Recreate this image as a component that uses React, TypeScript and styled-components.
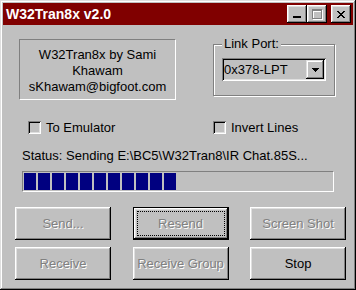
import React from "react";
import styled, { createGlobalStyle, css } from "styled-components";

const Global = createGlobalStyle`
  html, body { margin: 0; padding: 0; background: #c0c0c0; }
  body { font-family: "Liberation Sans", Arial, sans-serif; font-size: 13px; color: #000; }
  * { box-sizing: border-box; }
`;

const Window = styled.div`
  width: 356px;
  height: 290px;
  padding: 3px;
  background: #c0c0c0;
  display: flex;
  flex-direction: column;
  box-shadow: inset -1px -1px #000, inset 1px 1px #dfdfdf, inset -2px -2px #808080, inset 2px 2px #fff;
`;

const TitleBar = styled.div`
  height: 22px;
  background: #800000;
  display: flex;
  align-items: center;
  padding: 0 2px 0 3px;
`;

const Title = styled.div`
  flex: 1;
  color: #fff;
  font-weight: bold;
  font-size: 14px;
  line-height: 16px;
  white-space: nowrap;
`;

const CaptionButton = styled.div<{ $gap?: number }>`
  width: 20px;
  height: 18px;
  margin-left: ${(p) => p.$gap ?? 0}px;
  background: #c0c0c0;
  box-shadow: inset -1px -1px #000, inset 1px 1px #fff, inset -2px -2px #808080, inset 2px 2px #dfdfdf;
  display: flex;
  align-items: center;
  justify-content: center;
  svg { display: block; shape-rendering: crispEdges; }
`;

const Content = styled.div`
  flex: 1;
  display: flex;
  flex-direction: column;
`;

const TopRow = styled.div`
  display: flex;
  align-items: flex-start;
  margin-top: 14px;
  padding-left: 16px;
`;

const InfoBox = styled.div`
  width: 157px;
  height: 61px;
  border-style: solid;
  border-width: 1px;
  border-color: #808080 #fff #fff #808080;
  padding-top: 7px;
  text-align: center;
  line-height: 16px;
`;

const Group = styled.div`
  position: relative;
  width: 122px;
  height: 52px;
  margin: 5px 0 0 37px;
  border: 1px solid #808080;
  box-shadow: inset 1px 1px #fff, 1px 1px #fff;
  padding: 13px 0 0 8px;
`;

const Legend = styled.span`
  position: absolute;
  top: -9px;
  left: 8px;
  padding: 0 2px;
  background: #c0c0c0;
  line-height: 16px;
`;

const Combo = styled.div`
  width: 104px;
  height: 23px;
  padding: 2px;
  display: flex;
  align-items: stretch;
  background: #c0c0c0;
  box-shadow: inset 1px 1px #808080, inset -1px -1px #fff, inset 2px 2px #000, inset -2px -2px #dfdfdf;
`;

const ComboText = styled.div`
  flex: 1;
  padding-left: 0px;
  line-height: 19px;
`;

const DropButton = styled.div`
  width: 18px;
  display: flex;
  align-items: center;
  justify-content: center;
  box-shadow: inset -1px -1px #000, inset 1px 1px #dfdfdf, inset -2px -2px #808080, inset 2px 2px #fff;
  svg { display: block; shape-rendering: crispEdges; }
`;

const CheckRow = styled.div`
  display: grid;
  grid-template-columns: 185px auto;
  margin-top: 21px;
  padding-left: 25px;
`;

const CheckItem = styled.label`
  display: flex;
  align-items: center;
  gap: 5px;
  height: 13px;
  line-height: 16px;
`;

const CheckBox = styled.span`
  width: 13px;
  height: 13px;
  background: #c0c0c0;
  box-shadow: inset 1px 1px #808080, inset -1px -1px #fff, inset 2px 2px #000, inset -2px -2px #dfdfdf;
`;

const Status = styled.div`
  margin-top: 14px;
  padding-left: 19px;
  line-height: 16px;
  white-space: nowrap;
`;

const Progress = styled.div`
  margin: 7px 0 0 19px;
  width: 312px;
  height: 21px;
  border-style: solid;
  border-width: 1px;
  border-color: #808080 #fff #fff #808080;
  padding: 1px 1px 1px 1px;
  display: flex;
  gap: 2px;
`;

const Chunk = styled.div`
  width: 12px;
  height: 100%;
  background: #000080;
`;

const ButtonGrid = styled.div`
  display: grid;
  grid-template-columns: repeat(3, 96px);
  grid-auto-rows: 33px;
  column-gap: 21.5px;
  row-gap: 7px;
  margin-top: 15px;
  padding-left: 12px;
`;

const Button = styled.div<{ $disabled?: boolean; $default?: boolean }>`
  position: relative;
  display: flex;
  align-items: center;
  justify-content: center;
  white-space: nowrap;
  background: #c0c0c0;
  box-shadow: inset -1px -1px #000, inset 1px 1px #fff, inset -2px -2px #808080, inset 2px 2px #dfdfdf;
  color: ${(p) => (p.$disabled ? "#808080" : "#000")};
  text-shadow: ${(p) => (p.$disabled ? "1px 1px 0 #fff" : "none")};
  ${(p) =>
    p.$default &&
    css`
      border: 1px solid #000;
      &::after {
        content: "";
        position: absolute;
        inset: 3px;
        border: 1px dotted #000;
      }
    `}
`;

const Minimize = () => (
  <svg width="8" height="10" viewBox="0 0 8 10">
    <rect x="0" y="7" width="8" height="2" fill="#000" />
  </svg>
);

const Maximize = () => (
  <svg width="11" height="11" viewBox="0 0 11 11">
    <g fill="#fff" transform="translate(1,1)">
      <rect x="0" y="0" width="10" height="2" />
      <rect x="0" y="0" width="1" height="10" />
      <rect x="9" y="0" width="1" height="10" />
      <rect x="0" y="9" width="10" height="1" />
    </g>
    <g fill="#808080">
      <rect x="0" y="0" width="10" height="2" />
      <rect x="0" y="0" width="1" height="10" />
      <rect x="9" y="0" width="1" height="10" />
      <rect x="0" y="9" width="10" height="1" />
    </g>
  </svg>
);

const CloseGlyph = () => (
  <svg width="8" height="7" viewBox="0 0 8 7">
    <path
      fill="#000"
      d="M0 0h2v1H0zM6 0h2v1H6zM1 1h2v1H1zM5 1h2v1H5zM2 2h4v1H2zM3 3h2v1H3zM2 4h4v1H2zM1 5h2v1H1zM5 5h2v1H5zM0 6h2v1H0zM6 6h2v1H6z"
    />
  </svg>
);

const Arrow = () => (
  <svg width="7" height="4" viewBox="0 0 7 4">
    <path fill="#000" d="M0 0h7v1H0zM1 1h5v1H1zM2 2h3v1H2zM3 3h1v1H3z" />
  </svg>
);

export default function App() {
  const chunks = Array.from({ length: 11 });
  return (
    <>
      <Global />
      <Window>
        <TitleBar>
          <Title>W32Tran8x v2.0</Title>
          <CaptionButton><Minimize /></CaptionButton>
          <CaptionButton><Maximize /></CaptionButton>
          <CaptionButton $gap={4}><CloseGlyph /></CaptionButton>
        </TitleBar>
        <Content>
          <TopRow>
            <InfoBox>
              W32Tran8x by Sami
              <br />
              Khawam
              <br />
              sKhawam@bigfoot.com
            </InfoBox>
            <Group>
              <Legend>Link Port:</Legend>
              <Combo>
                <ComboText>0x378-LPT</ComboText>
                <DropButton><Arrow /></DropButton>
              </Combo>
            </Group>
          </TopRow>
          <CheckRow>
            <CheckItem><CheckBox />To Emulator</CheckItem>
            <CheckItem><CheckBox />Invert Lines</CheckItem>
          </CheckRow>
          <Status>Status: Sending E:\BC5\W32Tran8\IR Chat.85S...</Status>
          <Progress>
            {chunks.map((_, i) => (
              <Chunk key={i} />
            ))}
          </Progress>
          <ButtonGrid>
            <Button $disabled>Send...</Button>
            <Button $disabled $default>Resend</Button>
            <Button $disabled>Screen Shot</Button>
            <Button $disabled>Receive</Button>
            <Button $disabled>Receive Group</Button>
            <Button>Stop</Button>
          </ButtonGrid>
        </Content>
      </Window>
    </>
  );
}
